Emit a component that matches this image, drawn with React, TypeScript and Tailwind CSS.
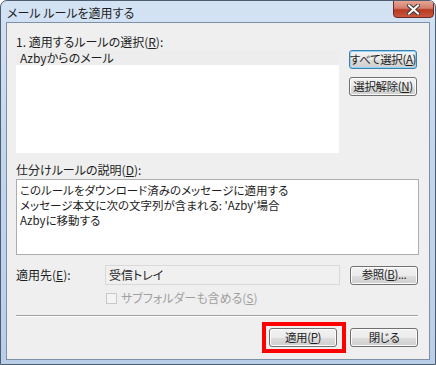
import React from "react";

const font = "font-['Noto_Sans_CJK_JP','Noto_Sans',sans-serif] [font-feature-settings:'palt']";

function Btn({ children, focused = false, className = "" }: { children: React.ReactNode; focused?: boolean; className?: string }) {
  return (
    <div
      className={`h-[19px] w-[68px] rounded-[3px] border flex items-center justify-center whitespace-nowrap text-[11.5px] leading-none tracking-[-0.4px] text-[#1e1e1e] bg-[linear-gradient(#f2f2f2_0%,#ebebeb_50%,#dddddd_51%,#cfcfcf_100%)] ${
        focused
          ? "border-[#3c7fb1] shadow-[inset_0_0_0_1px_#8fd3f5]"
          : "border-[#707070] shadow-[inset_0_0_0_1px_#fcfcfc]"
      } ${className}`}
    >
      {children}
    </div>
  );
}

export default function App() {
  return (
    <div className={`w-[436px] h-[365px] bg-white ${font}`}>
      <div className="w-[436px] h-[365px] relative rounded-t-[7px] border border-[#4d5d70] bg-[linear-gradient(#d4e3f4_0%,#c2d6ee_40%,#b9cfe9_100%)] overflow-hidden">
        {/* title bar */}
        <div className="h-[21px] flex items-center pl-[6px] pt-[2px] text-[12px] text-[#1e1e1e] leading-none">
          メール ルールを適用する
        </div>
        {/* close button */}
        <div className="absolute top-[-1px] left-[392px] w-[41px] h-[18px] rounded-b-[4px] border border-[#6b2a22] bg-[linear-gradient(#e8a493_0%,#d47f6c_45%,#b73a21_55%,#c9573e_100%)] flex items-center justify-center">
          <svg width="13" height="11" viewBox="0 0 13 11">
            <path d="M2 1.5 L11 9.5 M11 1.5 L2 9.5" stroke="#3a3a3a" strokeWidth="4" strokeLinecap="square" />
            <path d="M2 1.5 L11 9.5 M11 1.5 L2 9.5" stroke="#ffffff" strokeWidth="2" strokeLinecap="square" />
          </svg>
        </div>
        {/* client */}
        <div className="ml-[5px] w-[424px] h-[338px] border border-[#7e90a6] bg-[#efefef] text-[12px] text-[#1e1e1e]">
          <div className="pl-[9px] pr-[10px] pt-[11px]">
            <div className="h-[15px] leading-[15px]">
              1. 適用するルールの選択(<span className="underline">R</span>):
            </div>
            <div className="flex mt-[1px]">
              <div className="w-[323px] h-[103px] bg-white">
                <div className="h-[15px] bg-[#ededed] pl-[4px] leading-[15px]">Azbyからのメール</div>
              </div>
              <div className="ml-[10px] flex flex-col gap-[8px]">
                <Btn focused>
                  すべて選択(<span className="underline">A</span>)
                </Btn>
                <Btn>
                  選択解除(<span className="underline">N</span>)
                </Btn>
              </div>
            </div>
            <div className="mt-[9px] h-[15px] leading-[15px]">
              仕分けルールの説明(<span className="underline">D</span>):
            </div>
            <div className="mt-[2px] w-[403px] h-[76px] border border-[#adadad] bg-white pl-[3px] pt-[3px] text-[11.5px] leading-[15px]">
              <div className="h-[15px]">このルールをダウンロード済みのメッセージに適用する</div>
              <div className="h-[15px]">メッセージ本文に次の文字列が含まれる: 'Azby'場合</div>
              <div className="h-[15px]">Azbyに移動する</div>
            </div>
            <div className="mt-[10px] flex items-center h-[20px]">
              <div className="w-[89px]">
                適用先(<span className="underline">E</span>):
              </div>
              <div className="w-[235px] h-[20px] border border-[#d9d9d9] bg-[#f0f0f0] pl-[3px] leading-[18px]">受信トレイ</div>
              <Btn className="ml-[10px] h-[19px]">
                参照(<span className="underline">B</span>)...
              </Btn>
            </div>
            <div className="mt-[6px] ml-[90px] flex items-center h-[14px] text-[#a0a0a0]">
              <div className="w-[11px] h-[11px] border border-[#c9c9c9] bg-[#f4f4f4] mr-[4px]" />
              <span>
                サブフォルダーも含める(<span className="underline">S</span>)
              </span>
            </div>
            <div className="mt-[10px] h-[1px] w-[402px] bg-[#a0a0a0] border-b border-white box-content" />
            <div className="mt-[11px] flex justify-end pr-[1px] gap-[13px]">
              <div className="relative">
                <Btn>
                  適用(<span className="underline">P</span>)
                </Btn>
                <div className="absolute -left-[7px] -top-[6px] w-[84px] h-[31px] border-[4px] border-[#ff0000]" />
              </div>
              <Btn>閉じる</Btn>
            </div>
          </div>
        </div>
      </div>
    </div>
  );
}
